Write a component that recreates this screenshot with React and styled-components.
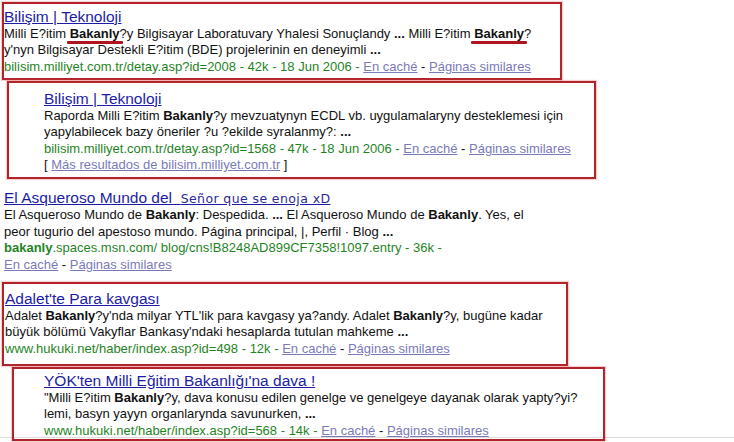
import React from "react";
import styled, { createGlobalStyle } from "styled-components";

const GlobalStyle = createGlobalStyle`
  html, body { margin: 0; padding: 0; background: #ffffff; }
  body { font-family: "Liberation Sans", Arial, sans-serif; }
`;

const Page = styled.div`
  width: 734px;
  height: 442px;
  overflow: hidden;
  padding-top: 2px;
  box-sizing: border-box;
  background: linear-gradient(#ffffff, #ffffff) no-repeat,
    linear-gradient(#dcdcdc, #dcdcdc) no-repeat;
  background-size: 100% 437px, 100% 1px;
  background-position: 0 0, 0 437px;
  font-family: "Liberation Sans", Arial, sans-serif;
`;

const Result = styled.div`
  box-sizing: border-box;
  margin-top: ${(p) => p.$mt}px;
  margin-left: ${(p) => p.$ml}px;
  width: ${(p) => (p.$w ? `${p.$w}px` : "auto")};
  padding: ${(p) => p.$pt}px 0 ${(p) => p.$pb}px ${(p) => p.$pl}px;
  border: 2px solid ${(p) => (p.$framed ? "#b3242a" : "transparent")};
  box-shadow: ${(p) =>
    p.$framed ? "0 0 1px 1px rgba(230, 120, 120, 0.35)" : "none"};
`;

const Title = styled.a`
  display: block;
  font-size: 15.5px;
  line-height: 16.5px;
  color: #1c1ca6;
  text-decoration: underline;
  white-space: nowrap;
  cursor: pointer;
`;

const Alt = styled.span`
  font-family: "DejaVu Sans", sans-serif;
  font-size: 12.5px;
  letter-spacing: 0.4px;
  color: #2a2a9a;
`;

const Line = styled.div`
  font-size: 13px;
  line-height: 16.5px;
  color: #111111;
  white-space: nowrap;
`;

const Url = styled.span`
  color: #1f841f;
`;

const Grey = styled.a`
  color: #7a7ab8;
  text-decoration: underline;
  cursor: pointer;
`;

const Marked = styled.b`
  position: relative;
  &::after {
    content: "";
    position: absolute;
    left: -3px;
    right: -3px;
    bottom: -3px;
    height: 3px;
    background: #b0141c;
    border-radius: 1px;
  }
`;

const Links = () => (
  <>
    <Grey>En caché</Grey> - <Grey>Páginas similares</Grey>
  </>
);

export default function App() {
  return (
    <>
      <GlobalStyle />
      <Page>
        <Result $framed $mt={0} $ml={2} $w={560} $pt={5} $pb={3} $pl={0}>
          <Title>Bilişim | Teknoloji</Title>
          <Line>
            Milli E?itim <Marked>Bakanly</Marked>?y Bilgisayar Laboratuvary
            Yhalesi Sonuçlandy <b>...</b> Milli E?itim <Marked>Bakanly</Marked>?
          </Line>
          <Line>
            y'nyn Bilgisayar Destekli E?itim (BDE) projelerinin en deneyimli{" "}
            <b>...</b>
          </Line>
          <Line>
            <Url>bilisim.milliyet.com.tr/detay.asp?id=2008 - 42k - 18 Jun 2006 - </Url>
            <Links />
          </Line>
        </Result>

        <Result $framed $mt={1} $ml={7} $w={589} $pt={8} $pb={3} $pl={35}>
          <Title>Bilişim | Teknoloji</Title>
          <Line>
            Raporda Milli E?itim <b>Bakanly</b>?y mevzuatynyn ECDL vb.
            uygulamalaryny desteklemesi için
          </Line>
          <Line>
            yapylabilecek bazy öneriler ?u ?ekilde syralanmy?: <b>...</b>
          </Line>
          <Line>
            <Url>bilisim.milliyet.com.tr/detay.asp?id=1568 - 47k - 18 Jun 2006 - </Url>
            <Links />
          </Line>
          <Line>
            [ <Grey>Más resultados de bilisim.milliyet.com.tr</Grey> ]
          </Line>
        </Result>

        <Result $mt={9} $ml={2} $pt={0} $pb={0} $pl={0}>
          <Title>
            El Asqueroso Mundo del{"\u00a0\u00a0"}
            <Alt>Señor que se enoja xD</Alt>
          </Title>
          <Line>
            El Asqueroso Mundo de <b>Bakanly</b>: Despedida. <b>...</b> El
            Asqueroso Mundo de <b>Bakanly</b>. Yes, el
          </Line>
          <Line>
            peor tugurio del apestoso mundo. Página principal, |, Perfil · Blog{" "}
            <b>...</b>
          </Line>
          <Line>
            <Url>
              <b>bakanly</b>.spaces.msn.com/ blog/cns!B8248AD899CF7358!1097.entry
              - 36k -
            </Url>
          </Line>
          <Line>
            <Links />
          </Line>
        </Result>

        <Result $framed $mt={7} $ml={2} $w={566} $pt={7} $pb={7} $pl={1}>
          <Title>Adalet'te Para kavgası</Title>
          <Line>
            Adalet <b>Bakanly</b>?y'nda milyar YTL'lik para kavgasy ya?andy.
            Adalet <b>Bakanly</b>?y, bugüne kadar
          </Line>
          <Line>
            büyük bölümü Vakyflar Bankasy'ndaki hesaplarda tutulan mahkeme{" "}
            <b>...</b>
          </Line>
          <Line>
            <Url>www.hukuki.net/haber/index.asp?id=498 - 12k - </Url>
            <Links />
          </Line>
        </Result>

        <Result $framed $mt={1} $ml={12} $w={593} $pt={4} $pb={0} $pl={30}>
          <Title>YÖK'ten Milli Eğitim Bakanlığı'na dava !</Title>
          <Line>
            "Milli E?itim <b>Bakanly</b>?y, dava konusu edilen genelge ve
            genelgeye dayanak olarak yapty?yi?
          </Line>
          <Line>
            lemi, basyn yayyn organlarynda savunurken, <b>...</b>
          </Line>
          <Line>
            <Url>www.hukuki.net/haber/index.asp?id=568 - 14k - </Url>
            <Links />
          </Line>
        </Result>
      </Page>
    </>
  );
}
